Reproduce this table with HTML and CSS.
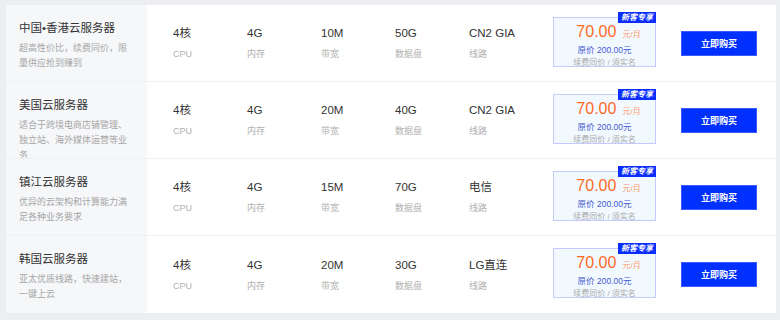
FILE: index.html
```html
<!DOCTYPE html>
<html lang="zh-CN">
<head>
<meta charset="utf-8">
<title>云服务器</title>
<link rel="stylesheet" href="styles.css">
</head>
<body>
<div class="list">
  <div class="row">
    <div class="intro">
      <div class="name">中国•香港云服务器</div>
      <div class="desc">超高性价比，续费同价，限量供应抢到赚到</div>
    </div>
    <div class="specs">
      <div class="spec"><div class="val">4核</div><div class="lbl">CPU</div></div>
      <div class="spec"><div class="val">4G</div><div class="lbl">内存</div></div>
      <div class="spec"><div class="val">10M</div><div class="lbl">带宽</div></div>
      <div class="spec"><div class="val">50G</div><div class="lbl">数据盘</div></div>
      <div class="spec"><div class="val">CN2 GIA</div><div class="lbl">线路</div></div>
    </div>
    <div class="price">
      <span class="badge">新客专享</span>
      <div class="now"><span class="num">70.00</span><span class="unit">元/月</span></div>
      <div class="orig">原价 200.00元</div>
      <div class="note">续费同价 / 须实名</div>
    </div>
    <button class="buy">立即购买</button>
  </div>
  <div class="row">
    <div class="intro">
      <div class="name">美国云服务器</div>
      <div class="desc">适合于跨境电商店铺管理、独立站、海外媒体运营等业务</div>
    </div>
    <div class="specs">
      <div class="spec"><div class="val">4核</div><div class="lbl">CPU</div></div>
      <div class="spec"><div class="val">4G</div><div class="lbl">内存</div></div>
      <div class="spec"><div class="val">20M</div><div class="lbl">带宽</div></div>
      <div class="spec"><div class="val">40G</div><div class="lbl">数据盘</div></div>
      <div class="spec"><div class="val">CN2 GIA</div><div class="lbl">线路</div></div>
    </div>
    <div class="price">
      <span class="badge">新客专享</span>
      <div class="now"><span class="num">70.00</span><span class="unit">元/月</span></div>
      <div class="orig">原价 200.00元</div>
      <div class="note">续费同价 / 须实名</div>
    </div>
    <button class="buy">立即购买</button>
  </div>
  <div class="row">
    <div class="intro">
      <div class="name">镇江云服务器</div>
      <div class="desc">优异的云架构和计算能力满足各种业务要求</div>
    </div>
    <div class="specs">
      <div class="spec"><div class="val">4核</div><div class="lbl">CPU</div></div>
      <div class="spec"><div class="val">4G</div><div class="lbl">内存</div></div>
      <div class="spec"><div class="val">15M</div><div class="lbl">带宽</div></div>
      <div class="spec"><div class="val">70G</div><div class="lbl">数据盘</div></div>
      <div class="spec"><div class="val">电信</div><div class="lbl">线路</div></div>
    </div>
    <div class="price">
      <span class="badge">新客专享</span>
      <div class="now"><span class="num">70.00</span><span class="unit">元/月</span></div>
      <div class="orig">原价 200.00元</div>
      <div class="note">续费同价 / 须实名</div>
    </div>
    <button class="buy">立即购买</button>
  </div>
  <div class="row">
    <div class="intro">
      <div class="name">韩国云服务器</div>
      <div class="desc">亚太优质线路，快速建站，一键上云</div>
    </div>
    <div class="specs">
      <div class="spec"><div class="val">4核</div><div class="lbl">CPU</div></div>
      <div class="spec"><div class="val">4G</div><div class="lbl">内存</div></div>
      <div class="spec"><div class="val">20M</div><div class="lbl">带宽</div></div>
      <div class="spec"><div class="val">30G</div><div class="lbl">数据盘</div></div>
      <div class="spec"><div class="val">LG直连</div><div class="lbl">线路</div></div>
    </div>
    <div class="price">
      <span class="badge">新客专享</span>
      <div class="now"><span class="num">70.00</span><span class="unit">元/月</span></div>
      <div class="orig">原价 200.00元</div>
      <div class="note">续费同价 / 须实名</div>
    </div>
    <button class="buy">立即购买</button>
  </div>
</div>
</body>
</html>
```

FILE: styles.css
```css
html, body {
  margin: 0;
  padding: 0;
}
body {
  background: #eceef2;
  width: 780px;
  height: 320px;
  overflow: hidden;
  font-family: "Liberation Sans", "Noto Sans CJK SC", sans-serif;
  color: #333;
}
.list {
  margin: 5px 4px 0 6px;
  background: #fff;
  display: flex;
  flex-direction: column;
}
.row {
  display: flex;
  align-items: center;
  height: 77px;
  box-sizing: border-box;
  border-bottom: 1px solid #eef0f3;
}
.row:last-child {
  border-bottom: none;
  height: 77px;
}
.intro {
  width: 141px;
  height: 100%;
  box-sizing: border-box;
  padding: 14px 15px 0 13px;
  background: #f6f7f9;
  overflow: hidden;
  flex-shrink: 0;
}
.name {
  font-size: 11.5px;
  line-height: 18px;
  color: #333;
  white-space: nowrap;
}
.desc {
  margin-top: 4px;
  font-size: 9px;
  line-height: 15px;
  color: #a6a6a6;
}
.specs {
  display: flex;
  padding-left: 26px;
}
.spec {
  width: 74px;
  display: flex;
  flex-direction: column;
  gap: 8px;
}
.val {
  font-size: 11.5px;
  line-height: 14px;
  color: #333;
  white-space: nowrap;
}
.lbl {
  font-size: 9px;
  line-height: 12px;
  color: #b0b0b0;
}
.price {
  position: relative;
  margin-left: 10px;
  margin-top: -3px;
  width: 103px;
  height: 50px;
  box-sizing: border-box;
  border: 1px solid #c3cbff;
  background: #f1f9ff;
  display: flex;
  flex-direction: column;
  align-items: center;
  padding-top: 5px;
}
.badge {
  position: absolute;
  top: -6px;
  right: -1px;
  width: 38px;
  height: 11px;
  background: #0b2eff;
  color: #fff;
  font-size: 8px;
  line-height: 11px;
  font-weight: bold;
  font-style: italic;
  text-align: center;
  white-space: nowrap;
}
.now {
  display: flex;
  align-items: baseline;
  gap: 6px;
  line-height: 17px;
  margin-left: 8px;
}
.num {
  font-size: 16px;
  color: #ff6a1f;
}
.unit {
  font-size: 8px;
  color: #ff9966;
}
.orig {
  margin-top: 1px;
  font-size: 8.5px;
  line-height: 12px;
  color: #4658cf;
  white-space: nowrap;
}
.note {
  margin-top: 1px;
  font-size: 8px;
  line-height: 12px;
  color: #aaaaaa;
  white-space: nowrap;
}
.buy {
  margin-left: 25px;
  width: 76px;
  height: 25px;
  padding: 0;
  border: 1px solid #3a5bff;
  background: #0030ff;
  color: #fff;
  font-family: "Noto Sans CJK SC", sans-serif;
  font-size: 9px;
  font-weight: bold;
  letter-spacing: 0;
  cursor: pointer;
}
```
